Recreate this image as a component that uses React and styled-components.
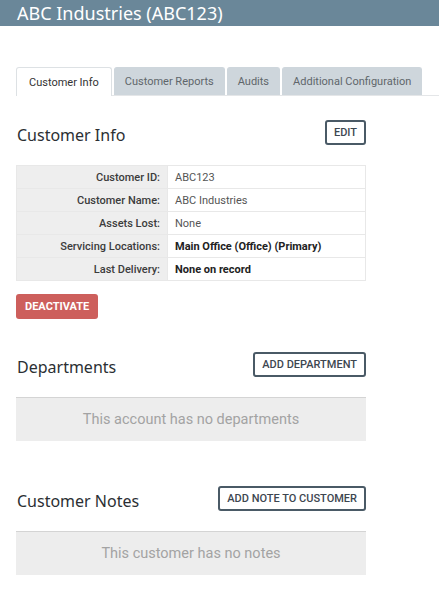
import React from 'react'
import styled, { createGlobalStyle } from 'styled-components'

const GlobalStyle = createGlobalStyle`
  body {
    margin: 0;
    background: white;
    font-family: Roboto, 'Liberation Sans', sans-serif;
    font-size: 11px;
    color: #333;
  }
`

const Header = styled.header`
  height: 26px;
  background: #6a8799;
  color: white;
  padding-left: 17px;
  font-family: 'Noto Sans', 'DejaVu Sans', sans-serif;
  font-size: 18px;
  line-height: 26px;
`

const TabBar = styled.ul`
  list-style: none;
  margin: 41px 0 0 16px;
  padding: 0;
  display: flex;
  gap: 2px;
  border-bottom: 1px solid #e4e6e8;
  height: 28px;
`

const Tab = styled.li`
  flex-shrink: 0;
  white-space: nowrap;
  padding: 0 ${({ active }) => (active ? '12px' : '10px')};
  height: ${({ active }) => (active ? '29px' : '28px')};
  display: flex;
  align-items: center;
  border-radius: 3px 3px 0 0;
  background: ${({ active }) => (active ? 'white' : '#ced6dc')};
  border: 1px solid ${({ active }) => (active ? '#dde1e4' : '#ced6dc')};
  border-bottom: none;
  color: ${({ active }) => (active ? '#333' : '#5f666b')};
  font-size: 11px;
  box-sizing: border-box;
`

const Content = styled.main`
  width: 350px;
  margin-left: 16px;
`

const SectionHead = styled.div`
  display: flex;
  justify-content: space-between;
  align-items: flex-end;
  margin-top: ${({ top }) => top}px;
`

const Title = styled.h2`
  margin: 0 0 0 1px;
  font-family: 'Noto Sans', 'DejaVu Sans', sans-serif;
  font-weight: normal;
  font-size: 16px;
  color: #2b2f33;
  line-height: 20px;
`

const OutlineButton = styled.button`
  height: 25px;
  padding: 0 7px;
  background: white;
  border: 2px solid #4a5a66;
  border-radius: 3px;
  font-family: Roboto, 'Liberation Sans', sans-serif;
  font-size: 11px;
  font-weight: 500;
  color: #3d4650;
  text-transform: uppercase;
`

const InfoTable = styled.table`
  width: 100%;
  border-collapse: collapse;
  margin-top: 20px;
  td {
    height: 22px;
    padding: 0 7px;
    border: 1px solid #e8e8e8;
  }
`

const Label = styled.td`
  width: 136px;
  background: #eeeeee;
  text-align: right;
  color: #3c3c3c;
  font-weight: 500;
`

const Value = styled.td`
  color: ${({ strong }) => (strong ? '#222' : '#555')};
  font-weight: ${({ strong }) => (strong ? 'bold' : 'normal')};
`

const DangerButton = styled.button`
  margin-top: 13px;
  height: 25px;
  padding: 0 9px;
  background: #cd5f5c;
  border: none;
  border-radius: 3px;
  color: white;
  font-family: Roboto, 'Liberation Sans', sans-serif;
  font-size: 11px;
  font-weight: bold;
`

const Empty = styled.div`
  margin-top: 20px;
  height: 43px;
  background: #ededed;
  border-top: 1px solid #d4d4d4;
  display: flex;
  align-items: center;
  justify-content: center;
  color: #a3a3a3;
  font-size: 14.5px;
`

const rows = [
  ['Customer ID:', 'ABC123'],
  ['Customer Name:', 'ABC Industries'],
  ['Assets Lost:', 'None'],
  ['Servicing Locations:', 'Main Office (Office) (Primary)', true],
  ['Last Delivery:', 'None on record', true],
]

const tabs = ['Customer Info', 'Customer Reports', 'Audits', 'Additional Configuration']

export default function App() {
  return (
    <>
      <GlobalStyle />
      <Header>ABC Industries (ABC123)</Header>
      <TabBar>
        {tabs.map((t, i) => (
          <Tab key={t} active={i === 0}>
            {t}
          </Tab>
        ))}
      </TabBar>
      <Content>
        <SectionHead top={24}>
          <Title>Customer Info</Title>
          <OutlineButton>Edit</OutlineButton>
        </SectionHead>
        <InfoTable>
          <tbody>
            {rows.map(([label, value, strong]) => (
              <tr key={label}>
                <Label>{label}</Label>
                <Value strong={strong}>{value}</Value>
              </tr>
            ))}
          </tbody>
        </InfoTable>
        <DangerButton>DEACTIVATE</DangerButton>

        <SectionHead top={33}>
          <Title>Departments</Title>
          <OutlineButton>Add Department</OutlineButton>
        </SectionHead>
        <Empty>This account has no departments</Empty>

        <SectionHead top={45}>
          <Title>Customer Notes</Title>
          <OutlineButton>Add Note to Customer</OutlineButton>
        </SectionHead>
        <Empty>This customer has no notes</Empty>
      </Content>
    </>
  )
}
